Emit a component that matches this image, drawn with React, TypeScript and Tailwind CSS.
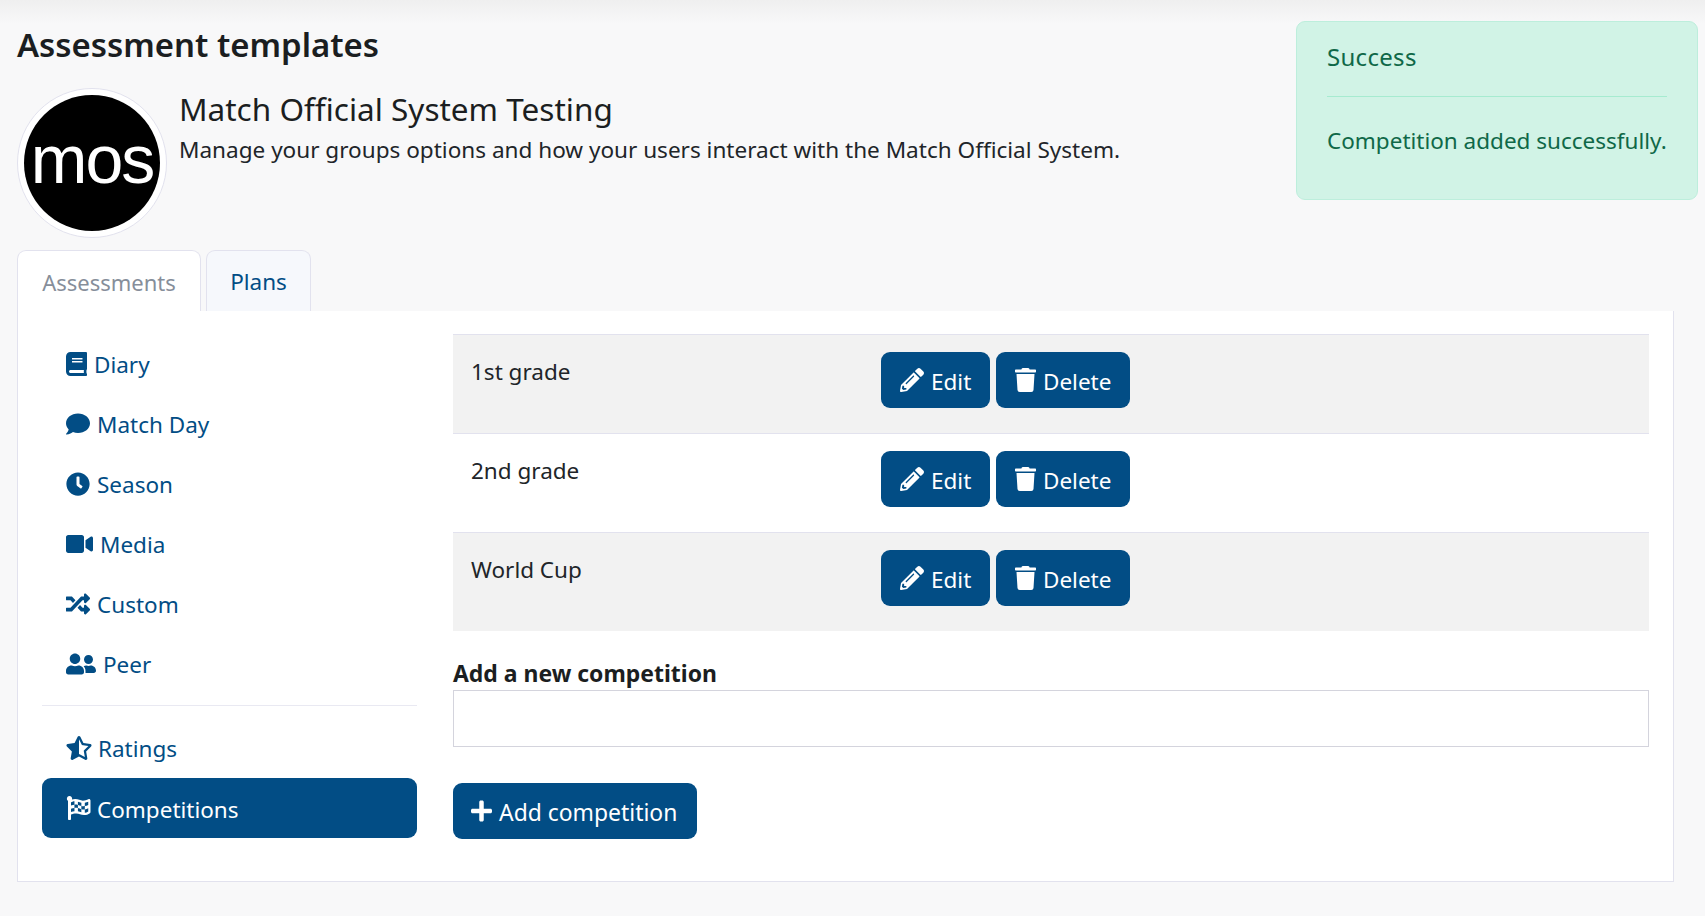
import React from "react";
import { FaBook, FaComment, FaClock, FaVideo, FaRandom, FaUserFriends, FaStarHalfAlt, FaFlagCheckered, FaPencilAlt, FaTrash, FaPlus } from "react-icons/fa";

const nav = [
  { label: "Diary", icon: <FaBook className="w-[21px] h-[24px]" /> },
  { label: "Match Day", icon: <FaComment className="w-[24px] h-[24px]" /> },
  { label: "Season", icon: <FaClock className="w-[24px] h-[24px]" /> },
  { label: "Media", icon: <FaVideo className="w-[27px] h-[24px]" /> },
  { label: "Custom", icon: <FaRandom className="w-[24px] h-[24px]" /> },
  { label: "Peer", icon: <FaUserFriends className="w-[30px] h-[24px]" /> },
];

function Btn({ icon, label, className }: { icon: React.ReactNode; label: string; className: string }) {
  return (
    <button className={"h-[56px] pl-[19px] rounded-[9px] bg-[#024d85] text-white flex items-center gap-[7px] text-[22.5px] " + className}>
      {icon}
      <span className="pt-[4px]">{label}</span>
    </button>
  );
}

function Row({ name, striped }: { name: string; striped?: boolean }) {
  return (
    <div className={"h-[99px] border-t border-[#e2e2ee] flex " + (striped ? "bg-[#f2f2f2]" : "bg-white")}>
      <div className="w-[428px] pl-[18px] pt-[19px] text-[22.5px] leading-[36px] text-[#212529]">{name}</div>
      <div className="flex gap-[6px] pt-[17px]">
        <Btn icon={<FaPencilAlt className="w-[24px] h-[24px]" />} label="Edit" className="w-[109px]" />
        <Btn icon={<FaTrash className="w-[21px] h-[24px]" />} label="Delete" className="w-[134px]" />
      </div>
    </div>
  );
}

export default function App() {
  return (
    <div className="relative min-h-[916px] bg-[#f8f8f9] bg-gradient-to-b from-[#efefef] to-[#f8f8f9] bg-[length:100%_24px] bg-no-repeat font-['Noto_Sans',sans-serif] text-[22.5px] text-[#212529] px-[17px] pt-[21px]">
      <div className="absolute left-[1296px] top-[21px] w-[402px] h-[179px] rounded-[9px] border border-[#bdeedc] bg-[#d1f3e6] text-[#0f6848] px-[30px]">
        <div className="h-[75px] flex items-center text-[24px] tracking-[0.3px] pb-[5px] border-b border-[#a6ebd0]">Success</div>
        <div className="pt-[26px] leading-[36px] whitespace-nowrap text-[22.5px]">Competition added successfully.</div>
      </div>

      <h1 className="text-[32.9px] leading-[48px] font-semibold text-[#1b1e21]">Assessment templates</h1>

      <div className="flex mt-[19px] gap-[12px]">
        <div className="w-[150px] h-[150px] rounded-full border border-[#e2e2ee] bg-white p-[6px] shrink-0">
          <div className="w-full h-full rounded-full bg-black flex items-center justify-center text-white text-[68px] tracking-[-2px] leading-none pb-[8px] font-['Liberation_Sans',sans-serif]">mos</div>
        </div>
        <div className="pt-[1px]">
          <div className="text-[31.5px] leading-[40px] text-[#1b1e21]">Match Official System Testing</div>
          <div className="text-[22.55px] leading-[32px] mt-[5px]">Manage your groups options and how your users interact with the Match Official System.</div>
        </div>
      </div>

      <div className="flex gap-[5px] mt-[12px]">
        <div className="w-[184px] h-[61px] pt-[2px] rounded-t-[9px] border border-b-0 border-[#e2e2ee] bg-white text-[#868e9a] text-[22px] flex items-center justify-center -mb-px relative z-10">Assessments</div>
        <div className="w-[105px] h-[61px] pt-[2px] rounded-t-[9px] border border-b-0 border-[#e2e2ee] bg-[#f6f8fc] text-[#024d85] flex items-center justify-center">Plans</div>
      </div>

      <div className="w-[1657px] h-[571px] border border-t-0 border-[#e2e2ee] bg-white flex pl-[24px] pr-[24px]">
        <div className="w-[375px] shrink-0 pt-[23px] text-[#024d85]">
          {nav.map((n) => (
            <div key={n.label} className="h-[60px] px-[24px] flex items-center gap-[7px]">
              {n.icon}
              <span className="pt-[2px]">{n.label}</span>
            </div>
          ))}
          <div className="border-t border-[#e9e9f2] mt-[11px] mb-[12px]" />
          <div className="h-[60px] px-[24px] flex items-center gap-[6px]">
            <FaStarHalfAlt className="w-[26px] h-[24px]" />
            <span className="pt-[2px]">Ratings</span>
          </div>
          <div className="h-[60px] px-[24px] flex items-center gap-[6px] rounded-[9px] bg-[#024d85] text-white">
            <FaFlagCheckered className="w-[25px] h-[24px]" />
            <span className="pt-[3px]">Competitions</span>
          </div>
        </div>
        <div className="ml-[36px] flex-1 pt-[23px]">
          <Row name="1st grade" striped />
          <Row name="2nd grade" />
          <Row name="World Cup" striped />
          <div className="font-bold text-[22.95px] leading-[34px] mt-[25px] text-[#1b1e21]">Add a new competition</div>
          <input className="block w-full h-[57px] border border-[#d4d4dd] bg-white" />
          <button className="mt-[36px] w-[244px] h-[56px] pl-[18px] rounded-[9px] bg-[#024d85] text-white flex items-center gap-[7px] text-[22.9px]">
            <FaPlus className="w-[21px] h-[24px]" />
            <span className="pt-[4px]">Add competition</span>
          </button>
        </div>
      </div>
    </div>
  );
}
